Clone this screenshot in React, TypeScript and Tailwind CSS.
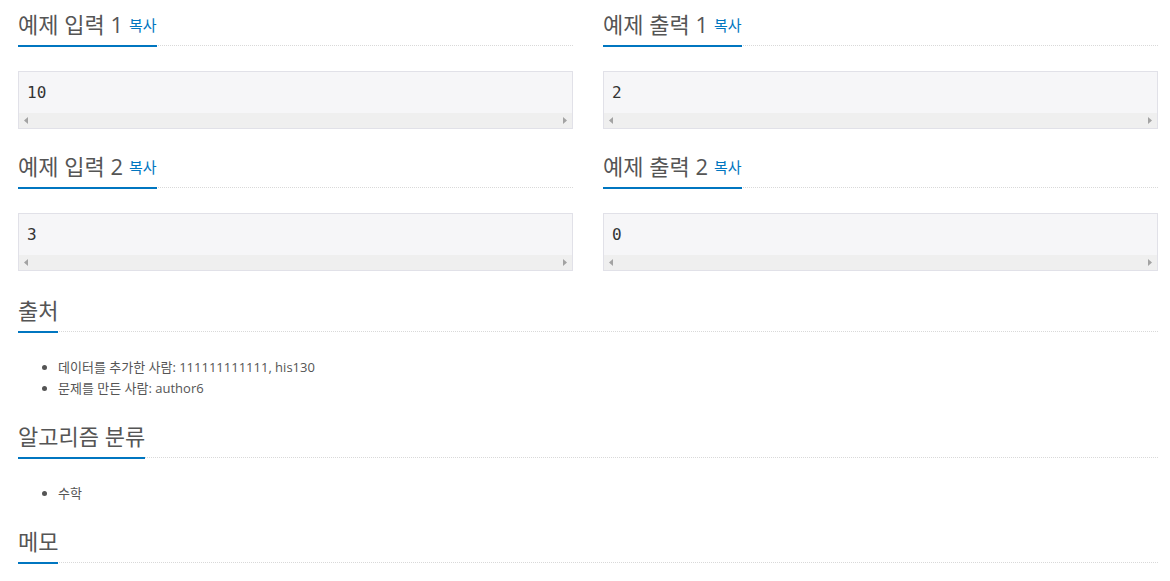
const FONT = "font-['Open_Sans','Noto_Sans_CJK_KR',sans-serif]";

// ── Headline ──────────────────────────────────────────────────────────────────

const Headline = ({ title, copy }: { title: string; copy?: boolean }) => (
  <div className="flex border-b border-dotted border-[#d9d9d9]">
    <h2 className="-mb-[2px] box-content flex h-[24px] items-center border-b-2 border-[#0076c0] pb-[9px] text-[22px] leading-[24px] font-normal whitespace-pre text-[#555]">
      <span>{title}</span>
      {copy && <span className="ml-[6px] pt-[3px] text-[15px] leading-none text-[#0076c0]">복사</span>}
    </h2>
  </div>
);

// ── SampleData ────────────────────────────────────────────────────────────────

const SampleData = ({ value }: { value: string }) => (
  <div className="mt-[25px] border border-[#e1e1e8] bg-[#f6f6f8]">
    <div className="flex h-[41px] items-center pl-[8px] font-['DejaVu_Sans_Mono',monospace] text-[16px] text-[#333]">
      {value}
    </div>
    <div className="flex h-[15px] items-center justify-between bg-[#efefef] px-[5px]">
      <svg width="4" height="7" viewBox="0 0 4 7">
        <path d="M4 0 L0 3.5 L4 7 Z" fill="#a3a3a3" />
      </svg>
      <svg width="4" height="7" viewBox="0 0 4 7">
        <path d="M0 0 L4 3.5 L0 7 Z" fill="#a3a3a3" />
      </svg>
    </div>
  </div>
);

const Sample = ({ title, value, first }: { title: string; value: string; first?: boolean }) => (
  <div className={first ? "mt-[12px]" : "mt-[25px]"}>
    <Headline title={title} copy />
    <SampleData value={value} />
  </div>
);

// ── List section ──────────────────────────────────────────────────────────────

const ListSection = ({ title, items, top }: { title: string; items: string[]; top: string }) => (
  <div className={top}>
    <Headline title={title} />
    {items.length > 0 && (
      <ul className="mt-[25px] list-disc pl-[40px] text-[13px] leading-[21px] text-[#555]">
        {items.map((it) => (
          <li key={it}>{it}</li>
        ))}
      </ul>
    )}
  </div>
);

export default function App() {
  return (
    <div className={`${FONT} h-[581px] w-[1170px] overflow-hidden bg-white pl-[18px] pr-[12px]`}>
      <div className="grid grid-cols-2 gap-x-[30px]">
        <Sample title="예제 입력 1" value="10" first />
        <Sample title="예제 출력 1" value="2" first />
        <Sample title="예제 입력 2" value="3" />
        <Sample title="예제 출력 2" value="0" />
      </div>
      <ListSection
        title="출처"
        top="mt-[27px]"
        items={["데이터를 추가한 사람: 111111111111, his130", "문제를 만든 사람: author6"]}
      />
      <ListSection title="알고리즘 분류" top="mt-[25px]" items={["수학"]} />
      <ListSection title="메모" top="mt-[25px]" items={[]} />
    </div>
  );
}
